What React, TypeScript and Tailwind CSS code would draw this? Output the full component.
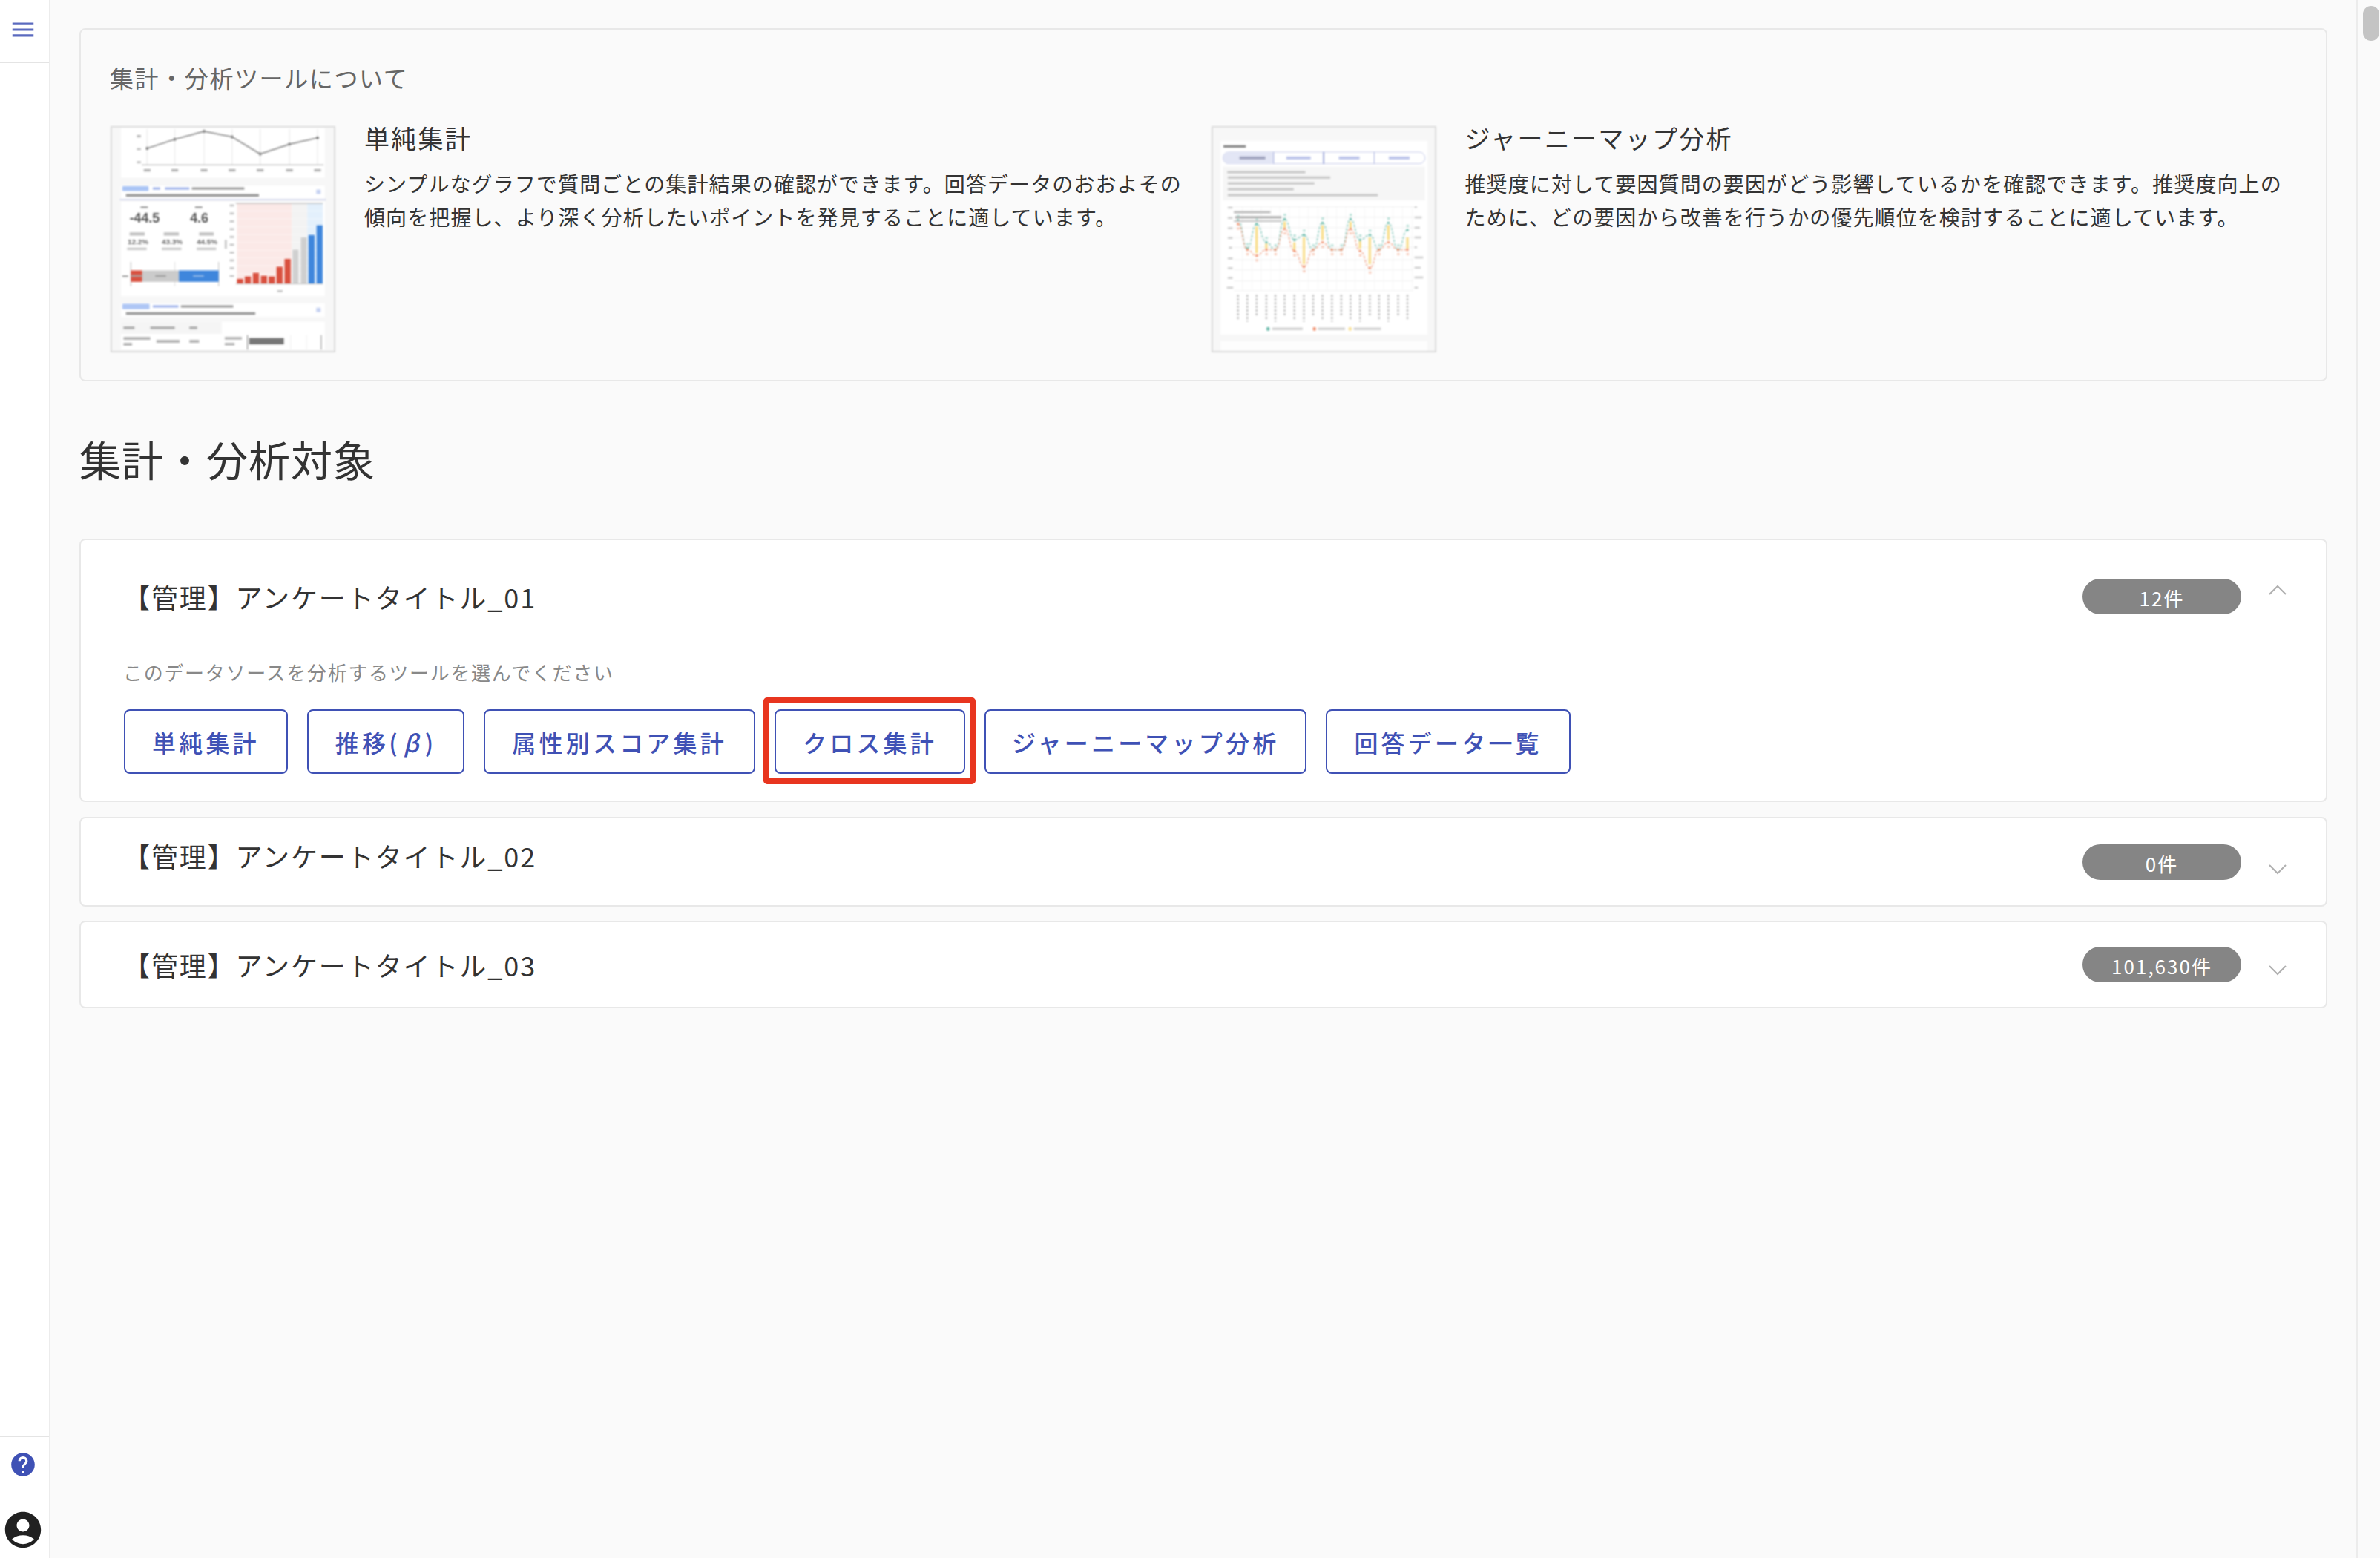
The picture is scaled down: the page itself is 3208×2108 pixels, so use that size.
import React from "react";

const FONT = "font-['Noto_Sans_CJK_JP','Noto_Sans',sans-serif]";

function Chevron({ up }: { up?: boolean }) {
  return (
    <svg width="24" height="14" viewBox="0 0 24 14" fill="none" stroke="#b0b0b0" strokeWidth="2">
      <path d={up ? "M1 13 L12 2 L23 13" : "M1 1 L12 12 L23 1"} />
    </svg>
  );
}

function Bars({ items, fill = "#9a9a9a" }: { items: number[][]; fill?: string }) {
  return (
    <>
      {items.map((b, i) => (
        <rect key={i} x={b[0]} y={b[1]} width={b[2]} height={b[3]} fill={fill} />
      ))}
    </>
  );
}

function ThumbSimple() {
  const pts = [[172, 115], [285, 78], [405, 45], [520, 68], [635, 138], [755, 98], [870, 72]];
  const red = [[540, 650], [572, 640], [605, 625], [638, 637], [670, 640], [702, 600], [735, 568]];
  return (
    <svg viewBox="30 30 905 915" className="w-[303px] h-[305px] shrink-0 blur-[1px] border-2 border-[#dcdcdc]">
      <rect x="30" y="30" width="905" height="915" fill="#f7f7f7" />
      <rect x="65" y="30" width="835" height="205" fill="#fff" />
      {pts.map((p, i) => (
        <g key={i}>
          <line x1={p[0]} x2={p[0]} y1="36" y2="183" stroke="#e6e6e6" strokeWidth="3" />
          <circle cx={p[0]} cy={p[1]} r="6" fill="#777" />
          <rect x={p[0] - 14} y="200" width="28" height="10" fill="#b5b5b5" />
        </g>
      ))}
      <polyline points={pts.map((p) => p.join(",")).join(" ")} fill="none" stroke="#8a8a8a" strokeWidth="5" />
      <line x1="150" x2="895" y1="183" y2="183" stroke="#c0c0c0" strokeWidth="4" />
      <Bars items={[[130, 60, 16, 10], [130, 114, 16, 8], [130, 168, 16, 8]]} fill="#bbb" />
      <rect x="65" y="268" width="835" height="54" fill="#fff" />
      <rect x="70" y="270" width="108" height="20" rx="4" fill="#a9c4f5" />
      <Bars items={[[195, 275, 30, 9], [245, 275, 100, 9]]} fill="#9fb2ea" />
      <Bars items={[[355, 275, 215, 9], [85, 302, 545, 11]]} />
      <rect x="865" y="284" width="18" height="18" fill="#c6d2f2" />
      <line x1="60" x2="905" y1="325" y2="325" stroke="#c3c9e8" strokeWidth="4" />
      <rect x="65" y="332" width="835" height="388" fill="#fff" />
      <text x="100" y="418" fontSize="54" fontWeight="700" fill="#555" fontFamily="Liberation Sans">-44.5</text>
      <text x="348" y="418" fontSize="54" fontWeight="700" fill="#555" fontFamily="Liberation Sans">4.6</text>
      <Bars items={[[145, 352, 30, 9], [368, 352, 30, 9]]} fill="#aaa" />
      <Bars items={[[100, 460, 62, 12], [240, 460, 62, 12], [385, 460, 60, 12]]} fill="#bcbcbc" />
      <text x="92" y="508" fontSize="30" fontWeight="700" fill="#666" fontFamily="Liberation Sans">12.2%</text>
      <text x="232" y="508" fontSize="30" fontWeight="700" fill="#666" fontFamily="Liberation Sans">43.3%</text>
      <text x="375" y="508" fontSize="30" fontWeight="700" fill="#666" fontFamily="Liberation Sans">44.5%</text>
      <Bars items={[[90, 522, 80, 9], [232, 522, 80, 9], [375, 522, 80, 9]]} fill="#c4c4c4" />
      <line x1="105" x2="105" y1="580" y2="680" stroke="#bbb" strokeWidth="3" />
      <line x1="285" x2="285" y1="580" y2="680" stroke="#ddd" strokeWidth="3" />
      <line x1="465" x2="465" y1="580" y2="680" stroke="#bbb" strokeWidth="3" />
      <rect x="105" y="615" width="47" height="47" fill="#d9503f" />
      <rect x="105" y="632" width="47" height="11" fill="#b98a84" />
      <rect x="152" y="615" width="150" height="47" fill="#cbcbcb" />
      <rect x="302" y="615" width="163" height="47" fill="#3f86dc" />
      <rect x="205" y="633" width="44" height="10" fill="#aaa" />
      <rect x="360" y="633" width="44" height="10" fill="#79a9e4" />
      <rect x="70" y="635" width="24" height="8" fill="#aaa" />
      <rect x="540" y="340" width="225" height="330" fill="#fbe9e7" />
      <rect x="765" y="340" width="63" height="330" fill="#f3f3f3" />
      <rect x="828" y="340" width="64" height="330" fill="#e3f0fc" />
      <line x1="535" x2="892" y1="340" y2="340" stroke="#aaa" strokeWidth="3" />
      {[372, 404, 436, 468, 500, 532, 564, 596, 628].map((y) => (
        <line key={y} x1="535" x2="892" y1={y} y2={y} stroke="#ffffff" strokeWidth="2" opacity="0.7" />
      ))}
      {red.map((b, i) => (
        <rect key={i} x={b[0]} y={b[1]} width="25" height={670 - b[1]} fill="#d9503f" />
      ))}
      <rect x="768" y="530" width="24" height="140" fill="#d0d0d0" />
      <rect x="802" y="480" width="24" height="190" fill="#cfcfcf" />
      <rect x="833" y="470" width="25" height="200" fill="#3f86dc" />
      <rect x="866" y="430" width="25" height="240" fill="#3f86dc" />
      <line x1="535" x2="892" y1="670" y2="670" stroke="#bbb" strokeWidth="3" />
      <Bars items={[[510, 345, 18, 8], [510, 378, 18, 8], [510, 410, 18, 8], [510, 442, 18, 8], [510, 474, 18, 8], [510, 506, 18, 8], [510, 538, 18, 8], [510, 570, 18, 8], [510, 602, 18, 8], [510, 634, 18, 8], [490, 490, 8, 36], [705, 696, 22, 8]]} fill="#c4c4c4" />
      <rect x="65" y="750" width="835" height="55" fill="#fff" />
      <rect x="70" y="752" width="112" height="22" rx="4" fill="#aec6f5" />
      <Bars items={[[195, 758, 105, 9]]} fill="#9fb2ea" />
      <Bars items={[[310, 758, 215, 9], [85, 786, 530, 11]]} />
      <rect x="865" y="768" width="18" height="18" fill="#c6d2f2" />
      <rect x="65" y="825" width="835" height="115" fill="#fff" />
      <rect x="65" y="825" width="412" height="50" fill="#f5f5f5" />
      <Bars items={[[75, 845, 45, 11], [185, 845, 100, 11], [345, 845, 32, 11], [75, 888, 110, 11], [75, 912, 35, 11], [210, 900, 95, 11], [345, 900, 40, 11], [490, 888, 70, 10], [490, 912, 40, 10]]} fill="#b0b0b0" />
      <rect x="590" y="892" width="142" height="26" fill="#777" />
      <line x1="583" x2="583" y1="880" y2="940" stroke="#777" strokeWidth="3" />
      <line x1="885" x2="885" y1="880" y2="940" stroke="#888" strokeWidth="3" />
      <line x1="760" x2="760" y1="880" y2="940" stroke="#eee" strokeWidth="3" />
      <line x1="825" x2="825" y1="880" y2="940" stroke="#eee" strokeWidth="3" />
    </svg>
  );
}

function ThumbJourney() {
  const xs = [142, 180, 218, 258, 295, 333, 373, 412, 450, 488, 527, 565, 603, 642, 682, 720, 758, 798, 836];
  const teal = [410, 525, 425, 500, 530, 405, 490, 470, 530, 420, 530, 530, 405, 490, 470, 530, 420, 530, 450];
  const orange = [425, 530, 555, 530, 530, 445, 535, 600, 530, 500, 530, 530, 445, 535, 605, 530, 500, 530, 530];
  const smooth = (ys: number[]) =>
    xs.map((x, i) => {
      if (i === 0) return `M${x} ${ys[0]}`;
      const mx = (xs[i - 1] + x) / 2;
      return `C${mx} ${ys[i - 1]} ${mx} ${ys[i]} ${x} ${ys[i]}`;
    }).join(" ");
  const yellow = [[218, 435, 110], [258, 505, 20], [333, 415, 25], [373, 500, 30], [412, 480, 110], [488, 430, 60], [603, 415, 25], [642, 495, 30], [682, 480, 110], [758, 430, 60], [836, 480, 45]];
  return (
    <svg viewBox="40 30 908 915" className="w-[303px] h-[305px] shrink-0 blur-[1px] border-2 border-[#dcdcdc]">
      <rect x="40" y="30" width="908" height="915" fill="#f7f7f7" />
      <rect x="70" y="85" width="848" height="793" fill="#fff" />
      <rect x="70" y="905" width="848" height="40" fill="#fdfdfd" />
      <rect x="82" y="102" width="92" height="10" fill="#888" />
      <rect x="80" y="130" width="828" height="48" rx="24" fill="#fff" stroke="#c5cae9" strokeWidth="3" />
      <path d="M288 130 H104 a24 24 0 0 0 0 48 H288 Z" fill="#e3e6f5" />
      <line x1="288" x2="288" y1="130" y2="178" stroke="#9fa8da" strokeWidth="3" />
      <line x1="493" x2="493" y1="130" y2="178" stroke="#7986cb" strokeWidth="4" />
      <line x1="700" x2="700" y1="130" y2="178" stroke="#9fa8da" strokeWidth="3" />
      <Bars items={[[148, 148, 106, 12]]} fill="#a0a4bf" />
      <Bars items={[[340, 148, 100, 12], [555, 148, 85, 12], [760, 148, 85, 12]]} fill="#bcc4ea" />
      <rect x="80" y="190" width="828" height="138" fill="#f6f6f6" />
      <Bars items={[[98, 208, 320, 9], [100, 230, 420, 9], [100, 254, 355, 9], [100, 278, 270, 9], [100, 302, 615, 9]]} fill="#c6c6c6" />
      {[355, 397, 440, 480, 520, 572, 612, 658, 698].map((y) => (
        <line key={y} x1="125" x2="860" y1={y} y2={y} stroke="#e8e8e8" strokeWidth="2" />
      ))}
      {xs.map((x) => (
        <line key={x} x1={x + 19} x2={x + 19} y1="350" y2="698" stroke="#f3f3f3" strokeWidth="2" />
      ))}
      <Bars items={[[100, 354, 20, 8], [100, 396, 20, 8], [100, 438, 20, 8], [100, 478, 20, 8], [104, 518, 14, 8], [100, 562, 20, 8], [100, 602, 20, 8], [100, 642, 20, 8], [96, 682, 26, 8], [865, 352, 10, 8], [865, 394, 30, 8], [865, 436, 22, 8], [865, 476, 28, 8], [865, 516, 10, 8], [865, 558, 36, 8], [865, 600, 26, 8], [865, 640, 36, 8], [865, 682, 14, 8]]} fill="#d0d0d0" />
      {yellow.map((b, i) => (
        <rect key={i} x={b[0] - 5} y={b[1]} width="10" height={b[2]} fill="#f9de8c" />
      ))}
      <path d={smooth(teal)} fill="none" stroke="#7cc6b8" strokeWidth="4" strokeDasharray="10 6" />
      <path d={smooth(orange)} fill="none" stroke="#f3a184" strokeWidth="4" strokeDasharray="10 6" />
      {xs.map((x, i) => (
        <g key={x}>
          <circle cx={x} cy={teal[i]} r="5" fill="#5fb5a4" />
          <circle cx={x} cy={orange[i]} r="5" fill="#f08e6b" />
          <rect x={x - 4} y={teal[i] - 22} width="10" height="9" fill="#b5dfd6" />
          <rect x={x - 4} y={orange[i] + 14} width="10" height="9" fill="#f7c8b6" />
          <line x1={x} x2={x} y1="715" y2={i % 3 === 0 ? 815 : i % 3 === 1 ? 825 : 803} stroke="#bdbdbd" strokeWidth="7" strokeDasharray="9 6" />
        </g>
      ))}
      <rect x="125" y="372" width="150" height="9" fill="#bbb" />
      <rect x="130" y="393" width="190" height="9" fill="#aaa" />
      <rect x="125" y="410" width="195" height="6" fill="#c0c0c0" />
      <rect x="258" y="848" width="14" height="14" rx="7" fill="#5fb5a4" />
      <rect x="282" y="850" width="125" height="9" fill="#ccc" />
      <rect x="448" y="848" width="14" height="14" rx="7" fill="#f08e6b" />
      <rect x="470" y="850" width="110" height="9" fill="#ccc" />
      <rect x="594" y="848" width="14" height="14" rx="7" fill="#f9de8c" />
      <rect x="616" y="850" width="112" height="9" fill="#ccc" />
    </svg>
  );
}

function InfoItem({ thumb, title, body }: { thumb: React.ReactNode; title: string; body: string }) {
  return (
    <div className="flex gap-[39px]">
      {thumb}
      <div className="min-w-0 flex-1">
        <h3 className="text-[34px] leading-[50px] tracking-[2.3px] text-[#333] mt-[-9px]">{title}</h3>
        <p className="text-[28px] leading-[45px] tracking-[1.1px] text-[#333] mt-[14px]">{body}</p>
      </div>
    </div>
  );
}

const BTN = "h-[87px] px-[36px] border-2 border-[#3f51b5] rounded-[8px] bg-white text-[32px] leading-none font-medium tracking-[4.2px] text-[#3f51b5] whitespace-nowrap";
const BTN_TIGHT = "h-[87px] px-[35px] border-2 border-[#3f51b5] rounded-[8px] bg-white text-[32px] leading-none font-medium tracking-[4.2px] text-[#3f51b5] whitespace-nowrap";

function Badge({ children }: { children: React.ReactNode }) {
  return (
    <span className="w-[214px] h-[48px] rounded-full bg-[#858585] text-white text-[26px] leading-[51px] tracking-[2px] text-center shrink-0">
      {children}
    </span>
  );
}

export default function App() {
  return (
    <div className="bg-white h-[2108px] w-[3208px] overflow-hidden">
      <div className={`${FONT} flex h-[2100px] w-full bg-[#fafafa]`}>
        <aside className="w-[68px] shrink-0 bg-white border-r-2 border-[#ececec] flex flex-col justify-between">
          <div className="h-[85px] border-b-2 border-[#e4e4e4] flex items-center justify-center pr-[5px] pb-[3px]">
            <svg width="38" height="38" viewBox="0 0 24 24" fill="#3f51b5" opacity="0.85">
              <path d="M3 18h18v-2H3v2zm0-5h18v-2H3v2zm0-7v2h18V6H3z" />
            </svg>
          </div>
          <div className="h-[165px] border-t-2 border-[#e4e4e4] flex flex-col items-center pt-[18px] gap-[40px] pr-[5px]">
            <svg width="38" height="38" viewBox="0 0 24 24" fill="#3f51b5">
              <path d="M12 2C6.48 2 2 6.48 2 12s4.48 10 10 10 10-4.48 10-10S17.52 2 12 2zm1 17h-2v-2h2v2zm2.07-7.75l-.9.92C13.45 12.9 13 13.5 13 15h-2v-.5c0-1.1.45-2.1 1.17-2.83l1.24-1.26c.37-.36.59-.86.59-1.41 0-1.1-.9-2-2-2s-2 .9-2 2H8c0-2.21 1.79-4 4-4s4 1.79 4 4c0 .88-.36 1.68-.93 2.25z" />
            </svg>
            <svg width="58" height="58" viewBox="0 0 24 24" fill="#212121">
              <path d="M12 2C6.48 2 2 6.48 2 12s4.48 10 10 10 10-4.48 10-10S17.52 2 12 2zm0 4c1.93 0 3.5 1.57 3.5 3.5S13.93 13 12 13s-3.5-1.57-3.5-3.5S10.07 6 12 6zm0 14c-2.03 0-4.43-.82-6.14-2.88C7.55 15.8 9.68 15 12 15s4.45.8 6.14 2.12C16.43 19.18 14.03 20 12 20z" />
            </svg>
          </div>
        </aside>

        <main className="flex-1 min-w-0 pt-[38px] pl-[39px] pr-[39px]">
          <section className="h-[476px] border-2 border-[#e8e8e8] rounded-[8px] pl-[39px] pr-[39px] pt-[42px]">
            <h2 className="text-[32px] leading-[44px] tracking-[1.6px] text-[#666]">集計・分析ツールについて</h2>
            <div className="grid grid-cols-2 gap-[20px] mt-[44px] pl-[1px]">
              <InfoItem
                thumb={<ThumbSimple />}
                title="単純集計"
                body="シンプルなグラフで質問ごとの集計結果の確認ができます。回答データのおおよその傾向を把握し、より深く分析したいポイントを発見することに適しています。"
              />
              <InfoItem
                thumb={<ThumbJourney />}
                title="ジャーニーマップ分析"
                body="推奨度に対して要因質問の要因がどう影響しているかを確認できます。推奨度向上のために、どの要因から改善を行うかの優先順位を検討することに適しています。"
              />
            </div>
          </section>

          <h1 className="text-[56px] leading-[80px] tracking-[1px] text-[#333] mt-[64px]">集計・分析対象</h1>

          <section className="mt-[68px] h-[355px] bg-white border-2 border-[#e8e8e8] rounded-[8px]">
            <div className="h-[152px] flex items-center pl-[57px] pr-[53px]">
              <span className="flex-1 text-[36px] tracking-[1.9px] text-[#333]">【管理】アンケートタイトル_01</span>
              <Badge>12件</Badge>
              <span className="ml-[37px] mb-[18px] flex"><Chevron up /></span>
            </div>
            <p className="pl-[57px] mt-[8px] text-[26px] leading-[36px] tracking-[1.7px] text-[#888]">
              このデータソースを分析するツールを選んでください
            </p>
            <div className="flex gap-[26px] pl-[58px] mt-[32px]">
              <button className={BTN}>単純集計</button>
              <button className={BTN}>推移(<span className="italic mx-[4px]">β</span>)</button>
              <button className={BTN}>属性別スコア集計</button>
              <div className="relative">
                <button className={BTN}>クロス集計</button>
                <div className="absolute left-[-15px] right-[-14px] top-[-16px] bottom-[-14px] border-8 border-[#e8351f] rounded-[5px] pointer-events-none" />
              </div>
              <button className={BTN_TIGHT}>ジャーニーマップ分析</button>
              <button className={BTN}>回答データ一覧</button>
            </div>
          </section>

          <section className="mt-[20px] h-[121px] bg-white border-2 border-[#e8e8e8] rounded-[8px] flex items-center pl-[57px] pr-[53px]">
            <span className="flex-1 pb-[17px] text-[36px] tracking-[1.9px] text-[#333]">【管理】アンケートタイトル_02</span>
            <Badge>0件</Badge>
            <span className="ml-[37px] mt-[20px] flex"><Chevron /></span>
          </section>

          <section className="mt-[19px] h-[118px] bg-white border-2 border-[#e8e8e8] rounded-[8px] flex items-center pl-[57px] pr-[53px]">
            <span className="flex-1 text-[36px] tracking-[1.9px] text-[#333]">【管理】アンケートタイトル_03</span>
            <Badge>101,630件</Badge>
            <span className="ml-[37px] mt-[16px] flex"><Chevron /></span>
          </section>
        </main>

        <div className="w-[32px] shrink-0 border-l-2 border-[#ececec] pl-[7px] pt-[8px]">
          <div className="w-[22px] h-[47px] rounded-full bg-[#c4c4c4]" />
        </div>
      </div>
    </div>
  );
}
